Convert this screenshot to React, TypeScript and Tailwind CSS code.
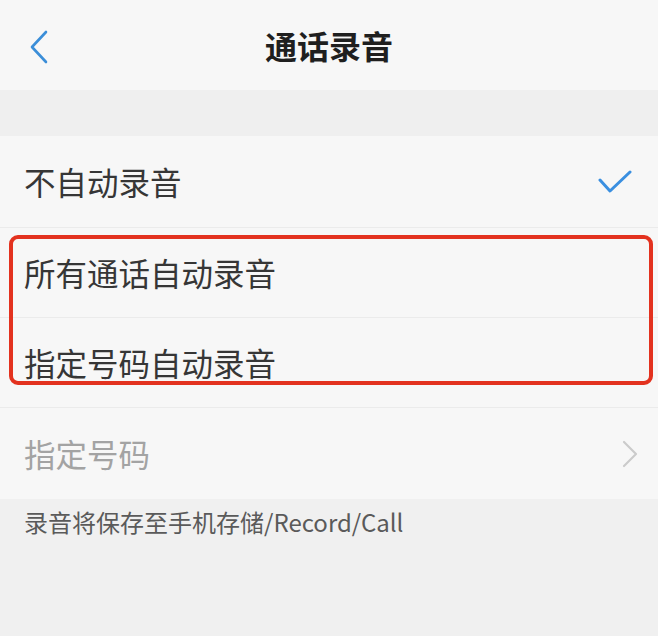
import React from "react";

const FONT = { fontFamily: '"Noto Sans CJK SC", "Noto Sans", sans-serif' };

function BackIcon() {
  return (
    <svg width="20" height="34" viewBox="0 0 20 34" fill="none">
      <path d="M17 2 L3 17 L17 32" stroke="#3b8ed8" strokeWidth="2.6" strokeLinecap="round" strokeLinejoin="round" />
    </svg>
  );
}

function CheckIcon() {
  return (
    <svg width="34" height="26" viewBox="0 0 34 26" fill="none">
      <path d="M2 11 L12 22 L32 3" stroke="#3a8fe0" strokeWidth="3" strokeLinecap="round" strokeLinejoin="round" />
    </svg>
  );
}

function ChevronRight() {
  return (
    <svg width="18" height="28" viewBox="0 0 18 28" fill="none">
      <path d="M3 2 L15 14 L3 26" stroke="#cbcbcb" strokeWidth="2.2" strokeLinecap="round" strokeLinejoin="round" />
    </svg>
  );
}

function Row({ label, muted, right, last }: { label: string; muted?: boolean; right?: React.ReactNode; last?: boolean }) {
  return (
    <div
      className={
        "flex h-[90px] items-center justify-between bg-[#f7f7f7] pl-[24px] " +
        (last ? "" : "border-b border-[#ebebeb]")
      }
    >
      <span className={"text-[31.5px] leading-none " + (muted ? "text-[#a3a3a3]" : "text-[#363636]")}>{label}</span>
      {right}
    </div>
  );
}

export default function App() {
  return (
    <div className="flex h-[636px] w-full flex-col bg-[#f0f0f0]" style={FONT}>
      <header className="grid h-[90px] grid-cols-[80px_1fr_80px] items-center bg-[#f7f7f7]">
        <div className="pl-[29px] pt-[3px]">
          <BackIcon />
        </div>
        <h1 className="text-center text-[32px] font-bold leading-none text-[#1f1f1f]">通话录音</h1>
        <div />
      </header>

      <div className="h-[46px] bg-[#efefef]" />

      <div className="flex h-[92px] items-center justify-between border-b border-[#ebebeb] bg-[#f7f7f7] pl-[24px] pr-[26px]">
        <span className="text-[31.5px] leading-none text-[#363636]">不自动录音</span>
        <CheckIcon />
      </div>

      <div className="relative">
        <Row label="所有通话自动录音" />
        <Row label="指定号码自动录音" />
        <div className="pointer-events-none absolute left-[9px] right-[5px] top-[7px] h-[150px] rounded-[9px] border-[4px] border-[#e3321f]" />
      </div>

      <div className="flex h-[91px] items-center justify-between bg-[#f7f7f7] pl-[24px] pr-[19px]">
        <span className="text-[31.5px] leading-none text-[#a3a3a3]">指定号码</span>
        <ChevronRight />
      </div>

      <p className="px-[24px] pt-[8px] text-[24px] leading-[30px] text-[#5a5a5a]">录音将保存至手机存储/Record/Call</p>
    </div>
  );
}
